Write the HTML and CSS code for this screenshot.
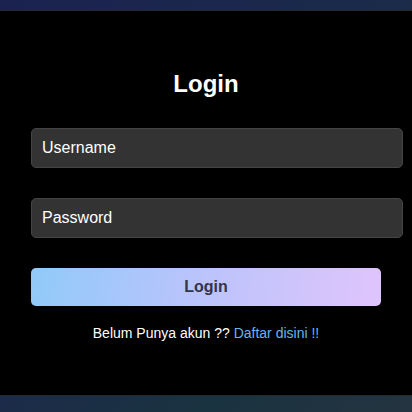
FILE: index.html
```html
<!DOCTYPE html>
<html>
<head>
<meta charset="utf-8">
<link rel="stylesheet" href="styles.css">
</head>
<body>
<div class="page">
  <form class="card">
    <h2 class="title">Login</h2>
    <input class="field" type="text" placeholder="Username">
    <input class="field" type="password" placeholder="Password">
    <button class="btn" type="button">Login</button>
    <p class="footer">Belum Punya akun ?? <a class="link" href="#">Daftar disini !!</a></p>
  </form>
</div>
</body>
</html>
```
FILE: styles.css
```css
html, body {
  margin: 0;
  padding: 0;
}
body {
  width: 412px;
  height: 412px;
  overflow: hidden;
  font-family: "Liberation Sans", Arial, sans-serif;
  background: linear-gradient(135deg, #1b2250 0%, #1b2a4a 45%, #1a3340 75%, #243440 100%);
}
.page {
  padding-top: 10px;
}
.card {
  box-sizing: border-box;
  height: 386px;
  background: #000;
  border-top: 1px solid #26282c;
  border-bottom: 1px solid #26282c;
  padding: 0 31px;
  display: flex;
  flex-direction: column;
  align-items: stretch;
}
.title {
  margin: 59px 0 0;
  font-size: 24px;
  font-weight: bold;
  color: #fff;
  text-align: center;
  line-height: 28px;
}
.field {
  box-sizing: border-box;
  width: 372px;
  height: 40px;
  margin-top: 30px;
  padding: 0 10px;
  background: #333;
  border: 1px solid #444;
  border-radius: 5px;
  color: #fff;
  font-family: "Liberation Sans", Arial, sans-serif;
  font-size: 16px;
  outline: none;
}
.field::placeholder {
  color: #fff;
  opacity: 1;
}
.btn {
  box-sizing: border-box;
  width: 350px;
  height: 38px;
  margin-top: 30px;
  border: none;
  border-radius: 5px;
  background: linear-gradient(100deg, #90caf9 0%, #b8c4fb 45%, #e0c4fc 100%);
  color: #33334a;
  font-family: "Liberation Sans", Arial, sans-serif;
  font-size: 16px;
  font-weight: bold;
}
.footer {
  margin: 19px 0 0;
  font-size: 14px;
  color: #fff;
  text-align: center;
  line-height: 16px;
}
.link {
  color: #64b5f6;
  text-decoration: none;
}
```
